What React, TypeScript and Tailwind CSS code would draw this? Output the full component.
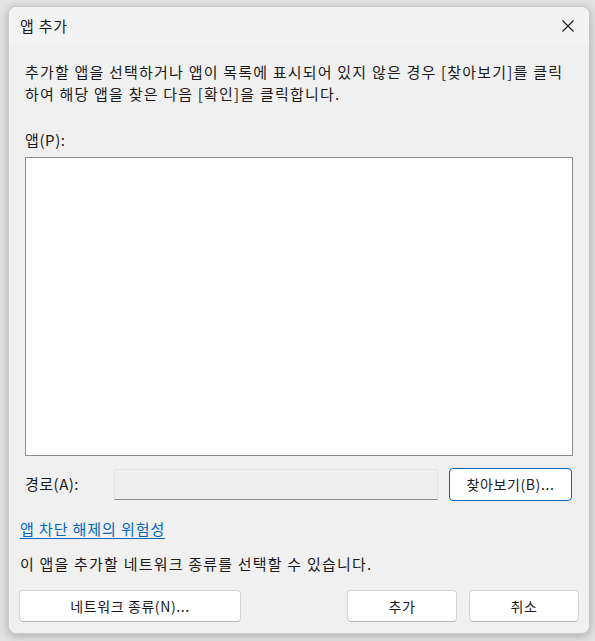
import React from 'react';

const font = { fontFamily: '"Noto Sans CJK KR", "Noto Sans", sans-serif' };

const Button: React.FC<{ label: string; className?: string; primary?: boolean }> = ({ label, className = '', primary }) => (
  <button
    className={`flex items-center justify-center bg-white rounded-[4px] text-[14px] tracking-[0.6px] text-[#1a1a1a] ${
      primary ? 'border border-[#0067c0]' : 'border border-[#d4d4d4] border-b-[#b8b8b8]'
    } ${className}`}
  >
    {label}
  </button>
);

export default function App() {
  return (
    <div className="min-h-[641px] w-[595px] bg-[#e3e3e3] pt-[6px] pl-[8px]" style={font}>
      <div className="w-[582px] h-[628px] rounded-[8px] bg-[#f0f0f0] border border-[#c9c9c9] shadow-[0_2px_10px_rgba(0,0,0,0.25)] overflow-hidden flex flex-col">
        {/* title bar */}
        <div className="h-[37px] bg-[#f3f3f3] flex items-center justify-between pl-[11px] pr-[15px]">
          <span className="text-[15px] tracking-[0.8px] text-[#1a1a1a] leading-none">앱 추가</span>
          <svg width="12" height="12" viewBox="0 0 12 12" className="text-[#1a1a1a]">
            <path d="M0.5 0.5 L11.5 11.5 M11.5 0.5 L0.5 11.5" stroke="currentColor" strokeWidth="1.1" fill="none" />
          </svg>
        </div>

        <div className="flex-1 flex flex-col px-[16px] text-[#1a1a1a] text-[15px] tracking-[1.2px]">
          <p className="mt-[17px] leading-[22px] whitespace-nowrap">
            추가할 앱을 선택하거나 앱이 목록에 표시되어 있지 않은 경우 [찾아보기]를 클릭
            <br />
            하여 해당 앱을 찾은 다음 [확인]을 클릭합니다.
          </p>

          <div className="mt-[24px] leading-[22px] tracking-[0.6px]">앱(P):</div>

          <div className="mt-[6px] h-[299px] bg-white border border-[#8c8c8c]" />

          <div className="mt-[12px] flex items-center h-[33px]">
            <span className="w-[89px] tracking-[0.5px]">경로(A):</span>
            <div className="w-[324px] h-[31px] bg-[#efefef] border border-[#e2e2e2] border-b-[#8a8a8a]" />
            <Button label="찾아보기(B)..." primary className="ml-[11px] w-[123px] h-[33px]" />
          </div>

          <a href="#" className="mt-[17px] -ml-[5px] self-start leading-[22px] tracking-[0.9px] text-[#0067c0] underline underline-offset-[3px]">
            앱 차단 해제의 위험성
          </a>

          <p className="mt-[13px] -ml-[5px] leading-[22px]">이 앱을 추가할 네트워크 종류를 선택할 수 있습니다.</p>

          <div className="mt-[15px] -ml-[6px] -mr-[6px] flex">
            <Button label="네트워크 종류(N)..." className="w-[222px] h-[32px]" />
            <div className="flex-1" />
            <Button label="추가" className="w-[110px] h-[32px]" />
            <Button label="취소" className="ml-[12px] w-[110px] h-[32px]" />
          </div>
        </div>
      </div>
    </div>
  );
}
